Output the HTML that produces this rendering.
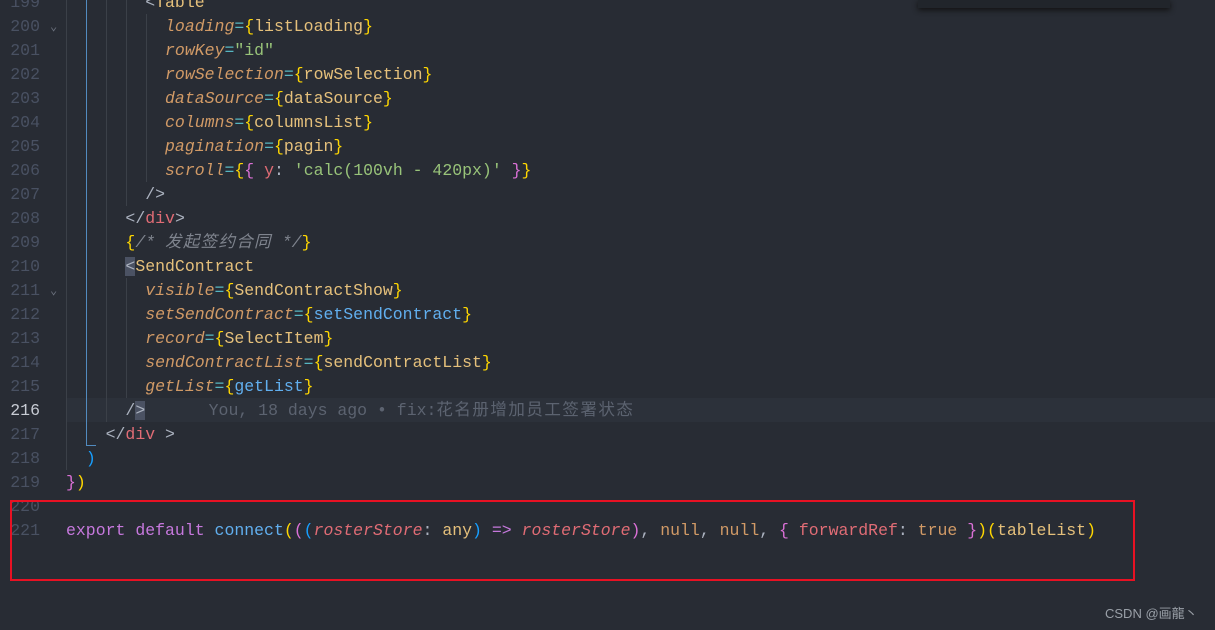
<!DOCTYPE html><html><head><meta charset="utf-8"><style>
body{margin:0;width:1215px;height:630px;background:#282c34;overflow:hidden;position:relative;font-family:"Liberation Mono","Noto Sans CJK SC",monospace;}
.l{position:absolute;left:0;height:24px;line-height:24px;font-size:16.5px;white-space:pre;width:1215px;margin-top:1px}
.n{position:absolute;left:0;width:40px;text-align:right;color:#495162}
.c{position:absolute;left:66px;color:#abb2bf}
.a{color:#d19a66;font-style:italic}.b{color:#ffd700}.p{color:#da70d6}.s{color:#179fff}
.t{color:#e5c07b}.v{color:#e5c07b}.g{color:#98c379}.r{color:#e06c75}.k{color:#c678dd}.f{color:#61afef}.o{color:#56b6c2}.cm{color:#7f848e;font-style:italic}.nu{color:#d19a66}.w{color:#abb2bf}
.gd{position:absolute;width:1px;background:#3b4048}
.ch{position:absolute;left:50px;color:#6b717d;font-size:12px}
.cj{letter-spacing:1.3px;font-family:"Noto Sans CJK SC",sans-serif;line-height:1}
</style></head><body>
<div style="position:absolute;left:918px;top:0;width:252px;height:8px;background:#21252b;box-shadow:0 2px 6px #111"></div>
<div style="position:absolute;left:66px;top:398px;width:1149px;height:24px;background:#2c313a"></div>
<div class="gd" style="left:66px;top:0;height:470px"></div>
<div class="gd" style="left:86px;top:0;height:446px;background:#528bbf"></div>
<div style="position:absolute;left:86px;top:445px;width:10px;height:1px;background:#528bbf"></div>
<div class="gd" style="left:106px;top:0;height:422px"></div>
<div class="gd" style="left:126px;top:0;height:206px"></div>
<div class="gd" style="left:146px;top:14px;height:168px"></div>
<div class="gd" style="left:126px;top:278px;height:120px"></div>

<div class="l" style="top:-10px"><span class="n">199</span><span class="c">        <span class="w">&lt;</span><span class="t">Table</span></span></div>
<div class="l" style="top:14px"><span class="n">200</span><span class="ch" style="top:0">⌄</span><span class="c">          <span class="a">loading</span><span class="o">=</span><span class="b">{</span><span class="v">listLoading</span><span class="b">}</span></span></div>
<div class="l" style="top:38px"><span class="n">201</span><span class="c">          <span class="a">rowKey</span><span class="o">=</span><span class="g">"id"</span></span></div>
<div class="l" style="top:62px"><span class="n">202</span><span class="c">          <span class="a">rowSelection</span><span class="o">=</span><span class="b">{</span><span class="v">rowSelection</span><span class="b">}</span></span></div>
<div class="l" style="top:86px"><span class="n">203</span><span class="c">          <span class="a">dataSource</span><span class="o">=</span><span class="b">{</span><span class="v">dataSource</span><span class="b">}</span></span></div>
<div class="l" style="top:110px"><span class="n">204</span><span class="c">          <span class="a">columns</span><span class="o">=</span><span class="b">{</span><span class="v">columnsList</span><span class="b">}</span></span></div>
<div class="l" style="top:134px"><span class="n">205</span><span class="c">          <span class="a">pagination</span><span class="o">=</span><span class="b">{</span><span class="v">pagin</span><span class="b">}</span></span></div>
<div class="l" style="top:158px"><span class="n">206</span><span class="c">          <span class="a">scroll</span><span class="o">=</span><span class="b">{</span><span class="p">{</span> <span class="r">y</span><span class="w">:</span> <span class="g">'calc(100vh - 420px)'</span> <span class="p">}</span><span class="b">}</span></span></div>
<div class="l" style="top:182px"><span class="n">207</span><span class="c">        <span class="w">/&gt;</span></span></div>
<div class="l" style="top:206px"><span class="n">208</span><span class="c">      <span class="w">&lt;/</span><span class="r">div</span><span class="w">&gt;</span></span></div>
<div class="l" style="top:230px"><span class="n">209</span><span class="c">      <span class="b">{</span><span class="cm">/* <span class="cj">发起签约合同</span> */</span><span class="b">}</span></span></div>
<div class="l" style="top:254px"><span class="n">210</span><span class="c">      <span class="w" style="background:#4b5263">&lt;</span><span class="t">SendContract</span></span></div>
<div class="l" style="top:278px"><span class="n">211</span><span class="ch" style="top:0">⌄</span><span class="c">        <span class="a">visible</span><span class="o">=</span><span class="b">{</span><span class="v">SendContractShow</span><span class="b">}</span></span></div>
<div class="l" style="top:302px"><span class="n">212</span><span class="c">        <span class="a">setSendContract</span><span class="o">=</span><span class="b">{</span><span class="f">setSendContract</span><span class="b">}</span></span></div>
<div class="l" style="top:326px"><span class="n">213</span><span class="c">        <span class="a">record</span><span class="o">=</span><span class="b">{</span><span class="v">SelectItem</span><span class="b">}</span></span></div>
<div class="l" style="top:350px"><span class="n">214</span><span class="c">        <span class="a">sendContractList</span><span class="o">=</span><span class="b">{</span><span class="v">sendContractList</span><span class="b">}</span></span></div>
<div class="l" style="top:374px"><span class="n">215</span><span class="c">        <span class="a">getList</span><span class="o">=</span><span class="b">{</span><span class="f">getList</span><span class="b">}</span></span></div>
<div class="l" style="top:398px"><span class="n" style="color:#c8ccd4">216</span><span class="c">      <span class="w">/</span><span class="w" style="background:#4b5263">&gt;</span>      <span style="color:#5c6370;margin-left:4px">You, 18 days ago • fix:<span class="cj" style="letter-spacing:1.5px">花名册增加员工签署状态</span></span></span></div>
<div class="l" style="top:422px"><span class="n">217</span><span class="c">    <span class="w">&lt;/</span><span class="r">div</span> <span class="w">&gt;</span></span></div>
<div class="l" style="top:446px"><span class="n">218</span><span class="c">  <span class="s">)</span></span></div>
<div class="l" style="top:470px"><span class="n">219</span><span class="c"><span class="p">}</span><span class="b">)</span></span></div>
<div class="l" style="top:494px"><span class="n">220</span></div>
<div class="l" style="top:518px"><span class="n">221</span><span class="c"><span class="k">export</span> <span class="k">default</span> <span class="f">connect</span><span class="b">(</span><span class="p">(</span><span class="s">(</span><span class="a" style="color:#e06c75">rosterStore</span><span class="w">:</span> <span class="t">any</span><span class="s">)</span> <span class="k">=&gt;</span> <span class="a" style="color:#e06c75">rosterStore</span><span class="p">)</span><span class="w">,</span> <span class="nu">null</span><span class="w">,</span> <span class="nu">null</span><span class="w">,</span> <span class="p">{</span> <span class="r">forwardRef</span><span class="w">:</span> <span class="nu">true</span> <span class="p">}</span><span class="b">)(</span><span class="v">tableList</span><span class="b">)</span></span></div>
<div style="position:absolute;left:10px;top:500px;width:1121px;height:77px;border:2px solid #e81123"></div>
<div style="position:absolute;left:1105px;top:603px;font-family:'Liberation Sans','Noto Sans CJK SC',sans-serif;font-size:13px;color:#9aa0a8">CSDN @画龍丶</div>
</body></html>
